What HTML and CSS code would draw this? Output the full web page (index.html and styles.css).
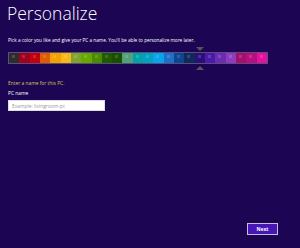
FILE: index.html
```html
<!DOCTYPE html>
<html lang="en">
<head>
    <meta charset="UTF-8">
    <title>Personalize</title>
    <link rel="stylesheet" href="styles.css">
</head>
<body>
<div class="page">
    <h1>Personalize</h1>
    <p class="intro">Pick a color you like and give your PC a name. You'll be able to personalize more later.</p>

    <div class="picker">
        <div class="strip">
            <span class="swatch c1"></span>
            <span class="swatch c2"></span>
            <span class="swatch c3"></span>
            <span class="swatch c4"></span>
            <span class="swatch c5"></span>
            <span class="swatch c6"></span>
            <span class="swatch c7"></span>
            <span class="swatch c8"></span>
            <span class="swatch c9"></span>
            <span class="swatch c10"></span>
            <span class="swatch c11"></span>
            <span class="swatch c12"></span>
            <span class="swatch c13"></span>
            <span class="swatch c14"></span>
            <span class="swatch c15"></span>
            <span class="swatch c16"></span>
            <span class="swatch c17"></span>
            <span class="swatch c18"></span>
            <span class="swatch c19 selected">
                <span class="arrow arrow-down"></span>
                <span class="arrow arrow-up"></span>
            </span>
            <span class="swatch c20"></span>
            <span class="swatch c21"></span>
            <span class="swatch c22"></span>
            <span class="swatch c23"></span>
            <span class="swatch c24"></span>
            <span class="swatch c25"></span>
        </div>
    </div>

    <p class="prompt">Enter a name for this PC.</p>
    <label class="field-label" for="pcname">PC name</label>
    <input id="pcname" class="field" type="text" placeholder="Example: livingroom-pc">

    <div class="footer">
        <button class="next">Next</button>
    </div>
</div>
</body>
</html>
```

FILE: styles.css
```css
html, body {
    margin: 0;
    height: 100%;
}
body {
    background-color: #1c0553;
    font-family: 'Open Sans', 'Liberation Sans', sans-serif;
    color: white;
}
.page {
    height: 248px;
    padding: 0 0 0 8px;
    box-sizing: border-box;
    display: flex;
    flex-direction: column;
}
h1 {
    font-weight: 300;
    font-size: 17.5px;
    margin: 1px 0 0 -1px;
    line-height: 24px;
}
.intro {
    font-size: 4.7px;
    margin: 12px 0 0 0;
    line-height: 7px;
}
.picker {
    margin-top: 8px;
    width: 260px;
}
.strip {
    display: flex;
    height: 10px;
    border: 1px solid #5b4d7c;
}
.swatch {
    flex: 1;
    position: relative;
}
.swatch::after {
    content: "";
    position: absolute;
    left: 3px;
    top: 2px;
    width: 3px;
    height: 3px;
    background: rgba(255,255,255,0.15);
}
.arrow {
    position: absolute;
    left: 50%;
    margin-left: -4px;
    width: 0;
    height: 0;
    border-left: 4px solid transparent;
    border-right: 4px solid transparent;
}
.arrow-down {
    top: -6px;
    border-top: 4px solid #555;
}
.arrow-up {
    bottom: -7px;
    border-bottom: 4px solid #555;
}
.c1 { background: #2d2d2d; }
.c2 { background: #a1001f; }
.c3 { background: #c10010; }
.c4 { background: #e05a00; }
.c5 { background: #f1a200; }
.c6 { background: #f7b817; }
.c7 { background: #7fa32e; }
.c8 { background: #66a800; }
.c9 { background: #4a8c00; }
.c10 { background: #1d5a00; }
.c11 { background: #185000; }
.c12 { background: #51a27a; }
.c13 { background: #00a1a8; }
.c14 { background: #00a2c4; }
.c15 { background: #07a3ec; }
.c16 { background: #1c71c7; }
.c17 { background: #0d4590; }
.c18 { background: #0f2a5a; }
.c19 { background: #2a0f78; }
.c20 { background: #4c1aa8; }
.c21 { background: #6a2cb0; }
.c22 { background: #8d3cc0; }
.c23 { background: #a2106c; }
.c24 { background: #b70f7d; }
.c25 { background: #e3119d; }
.prompt {
    color: #d6c25c;
    font-size: 4.9px;
    margin: 16px 0 0 0;
    line-height: 7px;
}
.field-label {
    font-size: 4.9px;
    margin-top: 3px;
    line-height: 7px;
}
.field {
    margin-top: 3px;
    width: 97px;
    height: 11px;
    box-sizing: border-box;
    border: 1px solid #ddd;
    padding: 0 3px;
    font-family: inherit;
    font-size: 4.9px;
    color: #222;
    outline: none;
}
.field::placeholder {
    color: #999;
}
.footer {
    margin-top: auto;
    display: flex;
    justify-content: flex-end;
    padding: 0 22px 13px 0;
}
.next {
    width: 31px;
    height: 12px;
    background: #4617b4;
    border: 1px solid #c7bde0;
    color: white;
    font-family: inherit;
    font-weight: bold;
    font-size: 4.9px;
    padding: 0;
}
```
